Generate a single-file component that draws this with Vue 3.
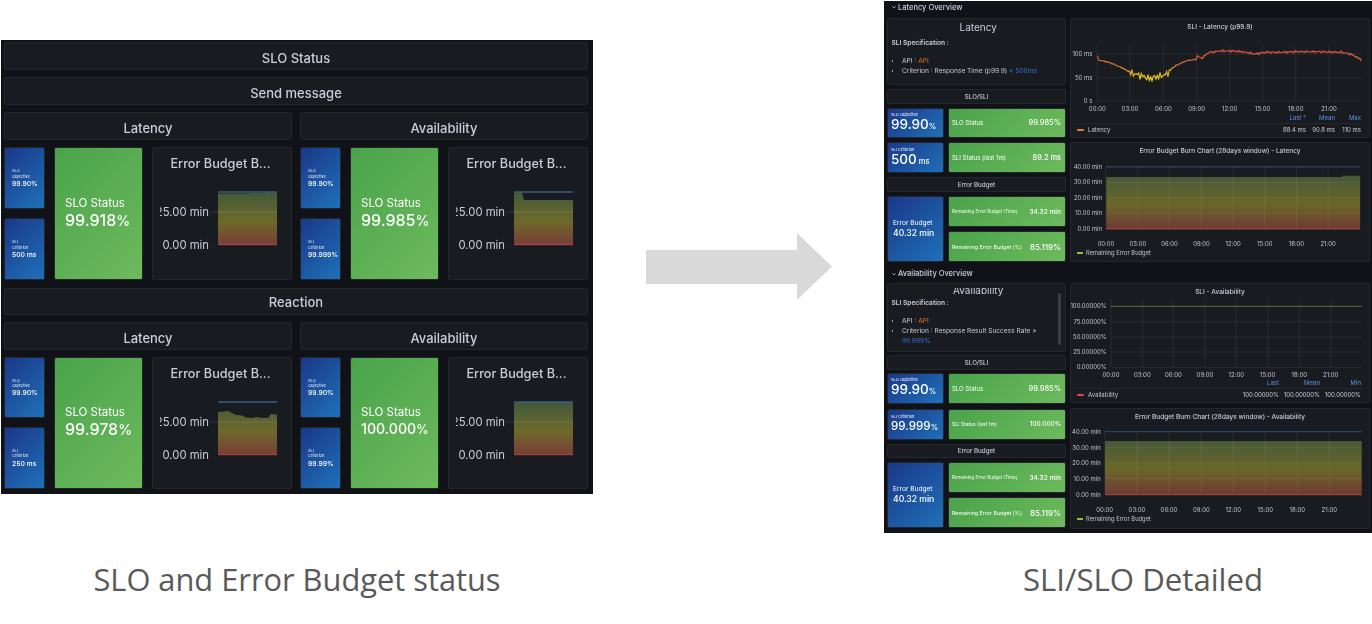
<script setup>
const top = [
  { title: 'Latency', crit: '500 ms', status: '99.918', id: 'm1', area: 'M58 22.5 H89 V22 H106 V21.6 H117 V73.7 H58 Z' },
  { title: 'Availability', crit: '99.999%', status: '99.985', id: 'm2', area: 'M58 21.5 H66 L68 29 H117 V73.7 H58 Z' }
]
const bottom = [
  { title: 'Latency', crit: '250 ms', status: '99.978', id: 'm3', area: 'M58 31 L64 30.5 L68 30 L72 32 L76 34 L82 34.5 L86 36.5 L92 37 L96 36 L102 37 L108 37 L111 33 L117 33.5 V73.7 H58 Z' },
  { title: 'Availability', crit: '99.99%', status: '100.000', id: 'm4', area: 'M58 21.5 H117 V73.7 H58 Z' }
]

const times = ['00:00', '03:00', '06:00', '09:00', '12:00', '15:00', '18:00', '21:00']

function latencyPath() {
  const a = [[97,168],[100,180],[130,186],[175,205],[195,218],[225,226],[255,236],[275,230],[295,226],[305,222],[330,198],[365,182],[394,178],[397,168],[410,175],[430,158],[465,153],[500,153],[530,155],[570,162],[600,157],[650,157],[700,155],[760,155],[830,157],[860,163],[890,180]]
  const pts = []
  let i = 0
  for (let zx = 97; zx <= 890; zx += 4) {
    while (i < a.length - 2 && a[i + 1][0] < zx) i++
    const t = (zx - a[i][0]) / (a[i + 1][0] - a[i][0])
    const base = a[i][1] + (a[i + 1][1] - a[i][1]) * t
    const amp = zx > 190 && zx < 325 ? 8 : zx > 395 ? 2.5 : 1
    const n = Math.sin(zx * 0.9) * amp + Math.sin(zx * 0.37) * amp * 0.5
    pts.push((1065 + zx / 3).toFixed(1) + ' ' + ((base + n) / 3).toFixed(1))
  }
  return 'M' + pts.join(' L')
}

const sections = [
  {
    key: 'sec-a', head: 'Latency Overview', name: 'Latency',
    apiCrit: 'Criterion : Response Time (p99.9) ', critVal: '< 500ms',
    crit: '500', critUnit: '\u00a0ms', sliVal: '89.2 ms',
    sli: {
      title: 'SLI - Latency (p99.9)', box: '1071 34 298 79', cols: '1fr auto 29px 26px', left: 1097.3, right: 1361.7,
      xs: [1097.3, 1130, 1163.3, 1196.7, 1229.7, 1262.7, 1295.7, 1329], xLabelY: 110.5, labelX: 1092.5,
      ys: [{ y: 54, t: '100 ms' }, { y: 77.7, t: '50 ms' }, { y: 101, t: '0 s' }],
      legend: 'Latency', swatch: '#e8803c',
      heads: ['Last *', 'Mean', 'Max'], vals: ['88.4 ms', '90.8 ms', '110 ms']
    },
    burn: {
      title: 'Error Budget Burn Chart (28days window) - Latency', box: '1071 157 298 91', id: 'b1',
      xs: [1104.7, 1137, 1169, 1201.3, 1233.3, 1265.3, 1297.3, 1329.3], xLabelY: 245.5,
      ys: [{ y: 166, t: '40.00 min' }, { y: 181.7, t: '30.00 min' }, { y: 197, t: '20.00 min' }, { y: 212.7, t: '10.00 min' }, { y: 228.7, t: '0.00 min' }],
      line: 166, base: 228.7, area: 'M1105 176.3 H1343.5 V175 H1361.7 V228.7 H1105 Z'
    }
  },
  {
    key: 'sec-b', head: 'Availability Overview', name: 'Availability',
    apiCrit: 'Criterion : Response Result Success Rate > ', critVal: '99.999%',
    crit: '99.999', critUnit: '%', sliVal: '100.000%',
    sli: {
      title: 'SLI - Availability', box: '1071 299 298 79', cols: '1fr auto 41px 41px', left: 1111, right: 1361.7,
      xs: [1111, 1142.3, 1173.3, 1205, 1236.3, 1267.7, 1299.3, 1330.7], xLabelY: 376.5, labelX: 1106.7,
      ys: [{ y: 306.3, t: '100.00000%' }, { y: 321.7, t: '75.00000%' }, { y: 337, t: '50.00000%' }, { y: 352, t: '25.00000%' }, { y: 367.3, t: '0.00000%' }],
      legend: 'Availability', swatch: '#e0485a',
      heads: ['Last', 'Mean', 'Min'], vals: ['100.00000%', '100.00000%', '100.00000%']
    },
    burn: {
      title: 'Error Budget Burn Chart (28days window) - Availability', box: '1071 424 298 90', id: 'b2',
      xs: [1104.7, 1137, 1169, 1201.3, 1233.3, 1265.3, 1297.3, 1329.3], xLabelY: 512,
      ys: [{ y: 431.7, t: '40.00 min' }, { y: 447.7, t: '30.00 min' }, { y: 463, t: '20.00 min' }, { y: 478.7, t: '10.00 min' }, { y: 494.7, t: '0.00 min' }],
      line: 431.7, base: 494.7, area: 'M1105 441 H1361.7 V494.7 H1105 Z'
    }
  }
]
const linePath = latencyPath()
</script>

<template>
  <main class="slide">
    <div class="col-left">
      <section class="dash-a">
        <div class="bar">SLO Status</div>
        <div class="bar">Send message</div>
        <template v-for="(group, g) in [top, bottom]" :key="g">
          <div v-if="g === 1" class="bar reaction">Reaction</div>
          <div class="pair">
            <div v-for="c in group" :key="c.id" class="bar">{{ c.title }}</div>
          </div>
          <div class="pair">
            <div v-for="c in group" :key="c.id" class="cell">
              <div class="minis">
                <div class="tile blue mini">
                  <span>SLO<br />Objective</span><b>99.90%</b>
                </div>
                <div class="tile blue mini">
                  <span>SLI<br />Criterion</span><b>{{ c.crit }}</b>
                </div>
              </div>
              <div class="tile green big" :class="{ long: c.status.length > 6 }">
                <span>SLO Status</span>
                <b>{{ c.status }}<small>%</small></b>
              </div>
              <div class="panel mini-chart">
                <div class="mini-title">Error Budget B...</div>
                <svg width="128" height="95" viewBox="0 0 128 95">
                  <defs>
                    <linearGradient :id="c.id" x1="0" y1="21" x2="0" y2="73.7" gradientUnits="userSpaceOnUse">
                      <stop offset="0" stop-color="#42583a" />
                      <stop offset="0.55" stop-color="#6c6a2a" />
                      <stop offset="1" stop-color="#7a3d36" />
                    </linearGradient>
                  </defs>
                  <path :d="c.area" :fill="`url(#${c.id})`" />
                  <line x1="51" x2="117" y1="41" y2="41" class="grid-line" />
                  <line x1="58" x2="117" y1="21" y2="21" class="budget" />
                  <line x1="58" x2="117" y1="73.7" y2="73.7" class="zero" />
                  <text x="49" y="45" text-anchor="end" class="mini-axis">25.00 min</text>
                  <text x="49" y="77.5" text-anchor="end" class="mini-axis">0.00 min</text>
                </svg>
              </div>
            </div>
          </div>
        </template>
      </section>
      <p class="caption">SLO and Error Budget status</p>
    </div>

    <svg class="arrow" width="186" height="67" viewBox="0 0 186 67">
      <path d="M0 17 H151 V0 L186 33.5 L151 67 V51 H0 Z" fill="#d9d9d9" />
    </svg>

    <div class="col-right">
      <section class="dash-b">
        <div v-for="s in sections" :key="s.key" class="sec" :class="s.key">
          <h2 class="sec-head">
            <svg width="6" height="6" viewBox="0 0 6 6"><path d="M1.2 2.2 L3 4 L4.8 2.2" fill="none" stroke="#aeb0bc" stroke-width=".8" /></svg>
            {{ s.head }}
          </h2>
          <div class="sec-body">
            <div class="side">
              <div class="panel spec">
                <div class="spec-view">
                  <div class="spec-in">
                    <div class="spec-name">{{ s.name }}</div>
                    <div class="spec-label">SLI Specification :</div>
                    <ul>
                      <li>API : <em class="api">API</em></li>
                      <li>{{ s.apiCrit }}<em class="crit">{{ s.critVal }}</em></li>
                    </ul>
                  </div>
                </div>
                <i v-if="s.key === 'sec-b'" class="scroll"></i>
              </div>
              <div class="panel label t1">SLO/SLI</div>
              <div class="stat-row r1">
                <div class="tile blue obj"><span>SLO Objective</span><b>99.90<small>%</small></b></div>
                <div class="tile green wide"><span>SLO Status</span><b>99.985%</b></div>
              </div>
              <div class="stat-row r2">
                <div class="tile blue obj" :class="{ pct: s.critUnit === '%' }"><span>SLI Criterion</span><b>{{ s.crit }}<small>{{ s.critUnit }}</small></b></div>
                <div class="tile green wide" :class="{ full: s.critUnit === '%' }"><span>SLI Status (last 1m)</span><b>{{ s.sliVal }}</b></div>
              </div>
              <div class="panel label t2">Error Budget</div>
              <div class="stat-row r3">
                <div class="tile blue budget-tile"><span>Error Budget</span><b>40.32 min</b></div>
                <div class="stack">
                  <div class="tile green wide time"><span>Remaining Error Budget (Time)</span><b>34.32 min</b></div>
                  <div class="tile green wide share"><span>Remaining Error Budget (%)</span><b>85.119%</b></div>
                </div>
              </div>
            </div>
            <div class="charts">
              <div class="panel chart">
                <div class="chart-title">{{ s.sli.title }}</div>
                <svg class="plot" width="298" height="79" :viewBox="s.sli.box">
                  <defs v-if="s.key === 'sec-a'">
                    <linearGradient id="heat" x1="0" y1="52" x2="0" y2="80" gradientUnits="userSpaceOnUse">
                      <stop offset="0" stop-color="#d84f48" />
                      <stop offset="0.45" stop-color="#cc7a2c" />
                      <stop offset="1" stop-color="#ecd61c" />
                    </linearGradient>
                  </defs>
                  <line v-for="x in s.sli.xs" :key="x" :x1="x" :x2="x" :y1="s.sli.ys[0].y - 9" :y2="s.sli.ys[s.sli.ys.length - 1].y" class="grid-line thin" />
                  <g v-for="y in s.sli.ys" :key="y.t">
                    <line :x1="s.sli.left" :x2="s.sli.right" :y1="y.y" :y2="y.y" class="grid-line thin" />
                    <text :x="s.sli.labelX" :y="y.y + 2" text-anchor="end" class="axis">{{ y.t }}</text>
                  </g>
                  <text v-for="(t, i) in times" :key="t" :x="s.sli.xs[i]" :y="s.sli.xLabelY" text-anchor="middle" class="axis">{{ t }}</text>
                  <path v-if="s.key === 'sec-a'" :d="linePath" fill="none" stroke="url(#heat)" stroke-width="1.2" />
                  <line v-else :x1="s.sli.left" :x2="s.sli.right" y1="306.3" y2="306.3" stroke="#55703c" stroke-width="1" />
                </svg>
                <div class="legend" :style="{ gridTemplateColumns: s.sli.cols }">
                  <span></span>
                  <span v-for="h in s.sli.heads" :key="h" class="lhead">{{ h }}</span>
                  <span class="lname"><i :style="{ background: s.sli.swatch }"></i>{{ s.sli.legend }}</span>
                  <span v-for="(v, i) in s.sli.vals" :key="i" class="lval">{{ v }}</span>
                </div>
              </div>
              <div class="panel chart">
                <div class="chart-title">{{ s.burn.title }}</div>
                <svg class="plot" width="298" height="90" :viewBox="s.burn.box">
                  <defs>
                    <linearGradient :id="s.burn.id" x1="0" :y1="s.burn.line" x2="0" :y2="s.burn.base" gradientUnits="userSpaceOnUse">
                      <stop offset="0.1" stop-color="#43583a" />
                      <stop offset="0.6" stop-color="#6a6629" />
                      <stop offset="1" stop-color="#6f3a34" />
                    </linearGradient>
                  </defs>
                  <path :d="s.burn.area" :fill="`url(#${s.burn.id})`" />
                  <line v-for="x in s.burn.xs" :key="x" :x1="x" :x2="x" :y1="s.burn.line" :y2="s.burn.base" class="grid-line thin" />
                  <g v-for="y in s.burn.ys" :key="y.t">
                    <line x1="1105" x2="1361.7" :y1="y.y" :y2="y.y" class="grid-line thin" />
                    <text x="1100.7" :y="y.y + 2" text-anchor="end" class="axis">{{ y.t }}</text>
                  </g>
                  <text v-for="(t, i) in times" :key="t" :x="s.burn.xs[i]" :y="s.burn.xLabelY" text-anchor="middle" class="axis">{{ t }}</text>
                  <line x1="1105" x2="1361.7" :y1="s.burn.line" :y2="s.burn.line" stroke="#2f4d78" stroke-width="1" />
                  <line x1="1105" x2="1361.7" :y1="s.burn.base" :y2="s.burn.base" stroke="#a8453f" stroke-width="1" />
                </svg>
                <div class="burn-legend"><i></i>Remaining Error Budget</div>
              </div>
            </div>
          </div>
        </div>
      </section>
      <p class="caption right">SLI/SLO Detailed</p>
    </div>
  </main>
</template>

<style>
html, body { margin: 0; background: #fff; }
</style>

<style scoped>
.slide {
  width: 1372px;
  height: 624px;
  overflow: hidden;
  display: flex;
  align-items: flex-start;
  background: #fff;
  font-family: Inter, "Liberation Sans", sans-serif;
  color: #ccccdc;
}
.col-left { width: 592px; margin-left: 1px; padding-top: 40px; flex: none; }
.arrow { flex: none; margin: 233px 52px 0 53px; }
.col-right { width: 488px; flex: none; }

.caption {
  margin: 0;
  font-family: "Open Sans", "Liberation Sans", sans-serif;
  font-size: 30.8px;
  line-height: 40px;
  color: #595959;
  text-align: center;
  white-space: nowrap;
}
.col-left .caption { margin-top: 65px; }
.caption.right { margin: 26px 0 0 30px; font-size: 31.2px; }

.panel { background: #181b1f; border: 1px solid #24272c; border-radius: 2px; box-sizing: border-box; }

/* left dashboard */
.dash-a {
  height: 454px;
  box-sizing: border-box;
  padding: 2px 5px 0 3px;
  background: #111217;
  display: grid;
  grid-template-rows: 27.5px 27.5px 27.5px 133px 27px 27.5px 131.5px;
  row-gap: 7.5px;
  filter: blur(.4px);
}
.bar {
  background: #181b1f;
  border: 1px solid #24272c;
  border-radius: 2px;
  box-sizing: border-box;
  display: flex;
  align-items: center;
  justify-content: center;
  padding-top: 4px;
  font-size: 13px;
  font-weight: 500;
  min-width: 0;
}
.bar.reaction { padding-top: 2px; }
.pair { display: grid; grid-template-columns: 288px 288px; column-gap: 8px; min-height: 0; }
.cell { display: grid; grid-template-columns: 41px 89px 140px; column-gap: 9px; min-height: 0; }
.minis { display: grid; grid-template-rows: 1fr 1fr; row-gap: 9px; }
.tile { box-sizing: border-box; border-radius: 2px; color: #fff; display: flex; min-width: 0; border: 1px solid #23262b; }
.blue { background: linear-gradient(135deg, #1a3889, #1f70b8); }
.green { background: linear-gradient(135deg, #4aa34b, #6dba5c); }
.mini { flex-direction: column; justify-content: center; padding-left: 7px; }
.mini span { font-size: 4px; line-height: 5.2px; opacity: .9; }
.mini b { font-size: 6.8px; line-height: 9px; font-weight: 500; }
.big { flex-direction: column; justify-content: center; padding-left: 10px; }
.big span { font-size: 11.5px; line-height: 14px; }
.big b { font-size: 16px; line-height: 20px; font-weight: 500; white-space: nowrap; }
.big small { font-size: 14px; }
.big.long b { font-size: 14.2px; }
.big.long small { font-size: 12.5px; }
.mini-chart { padding-left: 7px; overflow: hidden; }
.mini-title { font-size: 12.7px; font-weight: 500; line-height: 15px; padding-top: 8px; margin-left: -10px; text-align: center; white-space: nowrap; }
.mini-chart svg { display: block; }
.mini-axis { font-size: 11.3px; fill: #ccccdc; font-family: Inter, sans-serif; }
.grid-line { stroke: rgba(255, 255, 255, .13); stroke-width: 1; }
.grid-line.thin { stroke: rgba(255, 255, 255, .07); }
.budget { stroke: #4a7fb5; stroke-width: 1; }
.zero { stroke: #b5484a; stroke-width: 1; }

/* right dashboard */
.dash-b {
  height: 532px;
  margin-top: 1px;
  box-sizing: border-box;
  padding: 0 2px 0 3px;
  background: #111217;
  filter: blur(.55px);
}
.sec-head {
  margin: 0;
  display: flex;
  align-items: center;
  gap: 1px;
  padding-left: 4px;
  font-size: 7.5px;
  font-weight: 500;
  color: #ccccdc;
  box-sizing: border-box;
}
.sec-a .sec-head { height: 17px; padding-bottom: 5px; }
.sec-b .sec-head { height: 21px; padding-top: 2px; }
.sec-body { display: grid; grid-template-columns: 179px 300px; column-gap: 4px; }
.side { display: flex; flex-direction: column; }
.spec { position: relative; overflow: hidden; padding-left: 3.5px; }
.spec-view { height: 100%; overflow: hidden; }
.spec-name { font-size: 10px; line-height: 13px; text-align: center; padding-top: 2px; }
.spec-label { font-size: 6.6px; font-weight: 600; line-height: 8px; margin-top: 5px; }
.spec ul { margin: 8.5px 0 0; padding: 0 0 0 10.5px; font-size: 6.6px; line-height: 10px; }
.spec em { font-style: normal; }
.api { color: #e8731c; }
.crit { color: #3d71d9; }
.scroll { position: absolute; right: 4px; top: 9px; width: 3px; height: 52px; background: #3a3d42; border-radius: 2px; }
.label { display: flex; align-items: center; justify-content: center; font-size: 6.2px; font-weight: 500; }
.stat-row { display: grid; grid-template-columns: 57px 118px; column-gap: 4px; }
.obj { flex-direction: column; justify-content: center; padding-left: 3px; }
.obj span { font-size: 4px; line-height: 5px; }
.obj b { font-size: 13.5px; line-height: 15px; font-weight: 500; white-space: nowrap; }
.obj small { font-size: 7.5px; }
.obj.pct b { font-size: 11.6px; }
.wide { align-items: center; justify-content: space-between; padding: 0 4px 0 3px; }
.wide span { font-size: 6px; white-space: nowrap; }
.wide b { font-size: 7.4px; font-weight: 500; white-space: nowrap; }
.wide.full span { font-size: 5px; }
.wide.full b { font-size: 6.4px; }
.time span { font-size: 4.5px; }
.time b { font-size: 6.6px; }
.share span { font-size: 5.3px; }
.share b { font-size: 8px; }
.budget-tile { flex-direction: column; justify-content: center; padding-left: 5px; }
.budget-tile span { font-size: 6.6px; line-height: 9px; }
.budget-tile b { font-size: 8.6px; line-height: 11px; font-weight: 500; }
.stack { display: grid; grid-template-rows: 1fr 1fr; row-gap: 4px; }

.sec-a .spec { height: 67px; }
.sec-a .t1 { height: 15px; margin-top: 3.5px; }
.sec-a .r1 { height: 30px; margin-top: 4px; }
.sec-a .r2 { height: 31px; margin-top: 4.5px; }
.sec-a .t2 { height: 15px; margin-top: 4px; }
.sec-a .r3 { height: 66px; margin-top: 4px; }
.sec-b .spec { height: 69px; }
.sec-b .spec-view { margin-top: 4px; height: 62px; }
.sec-b .spec-in { margin-top: -6.5px; }
.sec-b .spec-label { margin-top: 2.5px; }
.sec-b .spec ul { margin-top: 9px; padding-right: 12px; }
.sec-b .t1 { height: 15px; margin-top: 2.5px; }
.sec-b .r1 { height: 31px; margin-top: 3px; }
.sec-b .r2 { height: 31px; margin-top: 5px; }
.sec-b .t2 { height: 14px; margin-top: 4px; }
.sec-b .r3 { height: 66px; margin-top: 4.5px; }

.charts { display: grid; row-gap: 4px; grid-template-rows: 120px 120px; }
.sec-b .charts { row-gap: 5px; grid-template-rows: 120px 121px; }
.chart { overflow: hidden; display: flex; flex-direction: column; }
.chart-title { font-size: 6.5px; font-weight: 500; line-height: 14px; padding-top: 1px; text-align: center; white-space: nowrap; flex: none; }
.plot { display: block; flex: none; }
.axis { font-size: 6px; fill: #c4c5d2; font-family: Inter, sans-serif; }
.legend { display: grid; padding: 0 8px 0 6px; font-size: 6px; line-height: 10px; }
.legend > .lhead, .legend > .lval { text-align: right; white-space: nowrap; }
.lhead { color: #5f93e6; }
.lname { display: flex; align-items: center; gap: 4px; color: #c4c5d2; border-top: 1px solid rgba(255, 255, 255, .06); line-height: 12px; }
.lval { border-top: 1px solid rgba(255, 255, 255, .06); line-height: 12px; }
.lname i { width: 7px; height: 1.6px; border-radius: 1px; display: block; }
.burn-legend { display: flex; align-items: center; gap: 3px; padding-left: 6px; font-size: 5.8px; line-height: 10px; color: #c4c5d2; }
.burn-legend i { width: 6px; height: 1.6px; background: #8fbf45; display: block; }
</style>
